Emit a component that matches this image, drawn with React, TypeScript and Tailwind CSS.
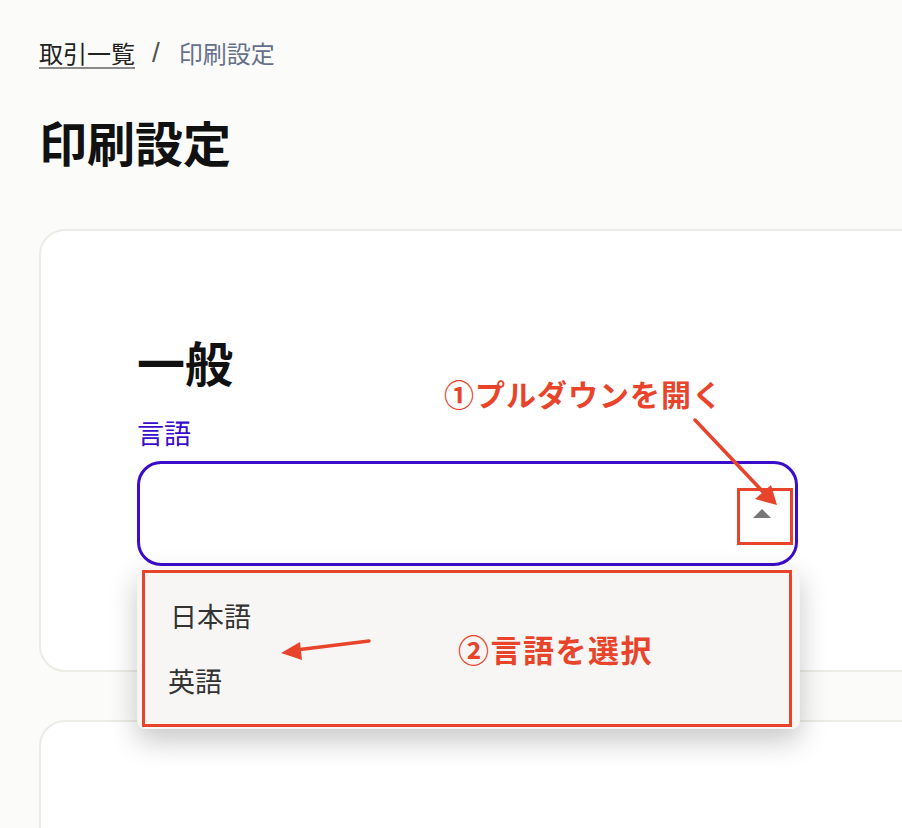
import React from "react";

const RED = "#e8442b";

export default function App() {
  return (
    <div className="relative h-[828px] w-full overflow-hidden bg-[#fbfbf9] font-['Noto_Sans_CJK_JP','Noto_Sans',sans-serif]">
      <div className="pl-[39px] pt-[41px]">
        {/* breadcrumb */}
        <nav className="flex items-center text-[24px] leading-[24px]">
          <span className="text-[#222] underline decoration-[#8a8a8a] decoration-2 underline-offset-[4px]">取引一覧</span>
          <span className="ml-[17px] mr-[19px] font-['Liberation_Sans',sans-serif] text-[28px] text-[#555]">/</span>
          <span className="text-[#66708a]">印刷設定</span>
        </nav>

        {/* title */}
        <h1 className="mt-[52px] text-[48px] font-bold leading-[48px] text-[#111]">印刷設定</h1>

        {/* card 1 */}
        <section className="mt-[64px] h-[443px] w-[900px] rounded-[26px] border-2 border-[#ecebe6] bg-white pl-[96px] pt-[106px]">
          <h2 className="text-[48px] font-bold leading-[48px] text-[#111]">一般</h2>
          <label className="mt-[34px] block text-[27px] leading-[27px] text-[#3a0ccb]">言語</label>
          <div className="relative mt-[15px] w-[661px]">
            <div className="flex h-[105px] items-center justify-end rounded-[24px] border-[3px] border-[#3a0ccb] bg-white pr-[24px]">
              <svg width="18" height="9" viewBox="0 0 18 9">
                <polygon points="9,0 18,9 0,9" fill="#777" />
              </svg>
            </div>
            {/* dropdown */}
            <div className="absolute left-0 top-[105px] z-10 h-[163px] w-[663px] rounded-[8px] bg-[#f7f6f4] pt-[18px] shadow-[0_12px_28px_rgba(0,0,0,0.22)]">
              <div className="flex h-[65px] items-center pl-[33px] text-[27px] text-[#333]">日本語</div>
              <div className="flex h-[65px] items-center pl-[31px] text-[27px] text-[#333]">英語</div>
            </div>
          </div>
        </section>

        {/* card 2 */}
        <section className="mt-[48px] h-[200px] w-[900px] rounded-[26px] border-2 border-[#ecebe6] bg-white" />
      </div>

      {/* annotation overlay */}
      <div className="pointer-events-none absolute inset-0 z-20">
        <div className="absolute left-[737px] top-[488px] h-[57px] w-[56px] border-[3px] border-[#e8442b]" />
        <div className="absolute left-[142px] top-[570px] h-[157px] w-[650px] border-[3px] border-[#e8442b]" />
        <div className="absolute left-[444px] top-[378px] whitespace-nowrap text-[30px] font-bold leading-[30px] tracking-[1px] text-[#e8442b]">①プルダウンを開く</div>
        <div className="absolute left-[458px] top-[633px] whitespace-nowrap text-[31px] font-bold leading-[31px] tracking-[1.5px] text-[#e8442b]">②言語を選択</div>
        <svg className="absolute left-0 top-0" width="902" height="828" viewBox="0 0 902 828">
          <line x1="695" y1="420" x2="766" y2="495" stroke={RED} strokeWidth="3.5" strokeLinecap="round" />
          <polygon points="777,505 755,499 771,485" fill={RED} />
          <line x1="369" y1="641" x2="296" y2="650" stroke={RED} strokeWidth="3.5" strokeLinecap="round" />
          <polygon points="281,653 300,642 302,660" fill={RED} />
        </svg>
      </div>
    </div>
  );
}
